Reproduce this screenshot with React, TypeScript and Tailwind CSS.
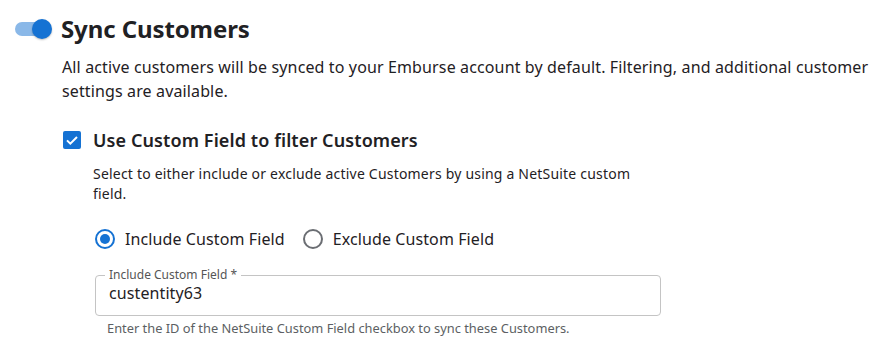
import React, { useState } from "react";

export default function App() {
  const [enabled, setEnabled] = useState(true);
  const [useField, setUseField] = useState(true);
  const [mode, setMode] = useState<"include" | "exclude">("include");
  const [value, setValue] = useState("custentity63");

  return (
    <div className="min-h-[342px] w-[883px] bg-white text-[#1f2124] font-['Noto_Sans',sans-serif]">
      <div className="pl-[15px] pt-[14px]">
        {/* header */}
        <div className="flex items-center h-[30px]">
          <button
            onClick={() => setEnabled(!enabled)}
            className="relative w-[37px] h-[20px] flex items-center"
          >
            <span className="block w-[32px] h-[14px] rounded-full bg-[#8ab8e8]" />
            <span
              className={
                enabled
                  ? "absolute left-[17px] top-0 w-[20px] h-[20px] rounded-full bg-[#1572d3] shadow-[0_1px_2px_rgba(0,0,0,0.25)]"
                  : "absolute left-0 top-0 w-[20px] h-[20px] rounded-full bg-white shadow-[0_1px_2px_rgba(0,0,0,0.25)]"
              }
            />
          </button>
          <h1 className="ml-[9px] text-[24px] leading-[30px] font-bold tracking-[-0.1px]">
            Sync Customers
          </h1>
        </div>

        <div className="pl-[47px]">
          <p className="mt-[11px] w-[815px] text-[16px] leading-[24px] tracking-[0.13px]">
            All active customers will be synced to your Emburse account by default. Filtering, and additional
            customer settings are available.
          </p>

          {/* custom field filter */}
          <div className="mt-[25px] pl-[1px]">
            <label className="flex items-center h-[24px] cursor-pointer">
              <span
                onClick={() => setUseField(!useField)}
                className={
                  useField
                    ? "w-[18px] h-[18px] rounded-[2px] bg-[#1572d3] flex items-center justify-center"
                    : "w-[18px] h-[18px] rounded-[2px] border-2 border-[#666] flex items-center justify-center"
                }
              >
                {useField && (
                  <svg viewBox="0 0 24 24" className="w-[16px] h-[16px]">
                    <path d="M4.5 12.5l5 5 10-10" fill="none" stroke="white" strokeWidth="3" />
                  </svg>
                )}
              </span>
              <span className="ml-[12px] text-[18px] font-semibold leading-[24px] tracking-[0.1px]">
                Use Custom Field to filter Customers
              </span>
            </label>

            <div className="pl-[30px]">
              <p className="mt-[12px] w-[548px] text-[14px] leading-[20px] tracking-[0.2px]">
                Select to either include or exclude active Customers by using a NetSuite custom field.
              </p>

              <div className="mt-[22px] flex items-center h-[26px] pl-[2px]">
                <RadioOption
                  label="Include Custom Field"
                  checked={mode === "include"}
                  onSelect={() => setMode("include")}
                />
                <div className="ml-[18px]">
                  <RadioOption
                    label="Exclude Custom Field"
                    checked={mode === "exclude"}
                    onSelect={() => setMode("exclude")}
                  />
                </div>
              </div>

              <fieldset className="mt-[17px] ml-[2px] w-[566px] h-[47px] border border-[#c4c4c4] rounded-[4px] px-[9px] pb-[6px]">
                <legend className="px-[4px] text-[12px] leading-[12px] text-[#555] font-normal">
                  Include Custom Field *
                </legend>
                <input
                  value={value}
                  onChange={(e) => setValue(e.target.value)}
                  className="w-full px-[4px] text-[16px] leading-[24px] outline-none bg-transparent text-[#1f2124] tracking-[0.1px]"
                />
              </fieldset>
              <p className="mt-[4px] ml-[14px] text-[12.85px] leading-[16px] text-[#5c5f63]">
                Enter the ID of the NetSuite Custom Field checkbox to sync these Customers.
              </p>
            </div>
          </div>
        </div>
      </div>
    </div>
  );
}

function RadioOption({
  label,
  checked,
  onSelect,
}: {
  label: string;
  checked: boolean;
  onSelect: () => void;
}) {
  return (
    <label className="flex items-center cursor-pointer" onClick={onSelect}>
      <span
        className={
          checked
            ? "w-[20px] h-[20px] rounded-full border-2 border-[#1572d3] flex items-center justify-center"
            : "w-[20px] h-[20px] rounded-full border-2 border-[#6b6e73] flex items-center justify-center"
        }
      >
        {checked && <span className="w-[10px] h-[10px] rounded-full bg-[#1572d3]" />}
      </span>
      <span className="ml-[10px] text-[16px] leading-[24px] tracking-[0.1px]">{label}</span>
    </label>
  );
}
